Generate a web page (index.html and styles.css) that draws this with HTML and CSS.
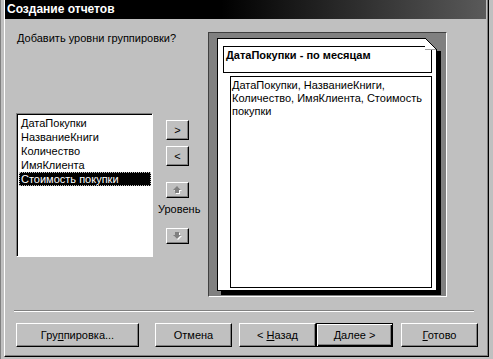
FILE: index.html
```html
<!DOCTYPE html>
<html lang="ru">
<head>
    <meta charset="UTF-8">
    <meta name="viewport" content="width=device-width, initial-scale=1.0">
    <title>Создание отчетов</title>
    <link rel="stylesheet" href="styles.css">
</head>
<body>
    <div class="screen">
        <div class="edge"></div>
        <div class="dialog">
            <div class="titlebar">Создание отчетов</div>

            <div class="main">
                <div class="fields">
                    <p class="question">Добавить уровни группировки?</p>
                    <ul class="listbox">
                        <li>ДатаПокупки</li>
                        <li>НазваниеКниги</li>
                        <li>Количество</li>
                        <li>ИмяКлиента</li>
                        <li class="selected">Стоимость покупки</li>
                    </ul>
                </div>

                <div class="movers">
                    <button class="btn small">&gt;</button>
                    <button class="btn small">&lt;</button>
                    <button class="btn small arrow up">
                        <svg width="10" height="9" viewBox="0 0 10 9">
                            <polygon points="5,1 9,5 7,5 7,8 3,8 3,5 1,5" fill="#fff"/>
                            <polygon points="4,0 8,4 6,4 6,7 2,7 2,4 0,4" fill="#808080"/>
                        </svg>
                    </button>
                    <span class="level-label">Уровень</span>
                    <button class="btn small arrow down">
                        <svg width="10" height="9" viewBox="0 0 10 9">
                            <polygon points="5,8 9,4 7,4 7,1 3,1 3,4 1,4" fill="#fff"/>
                            <polygon points="4,7 8,3 6,3 6,0 2,0 2,3 0,3" fill="#808080"/>
                        </svg>
                    </button>
                </div>

                <div class="preview">
                    <div class="page">
                        <div class="group-head">ДатаПокупки - по месяцам</div>
                        <div class="group-body">ДатаПокупки, НазваниеКниги, Количество, ИмяКлиента, Стоимость покупки</div>
                        <svg class="fold" width="17" height="13" viewBox="0 0 17 13">
                            <polygon points="1,0 17,0 17,13 13,13 13,12" fill="#808080"/>
                            <polygon points="1,0 12,11 1,11" fill="#fff"/>
                            <line x1="1" y1="11.5" x2="12" y2="11.5" stroke="#a0a0a0"/>
                            <line x1="1" y1="0" x2="13" y2="12" stroke="#000"/>
                        </svg>
                    </div>
                </div>
            </div>

            <div class="separator"></div>

            <div class="actions">
                <button class="btn wide"><span>Гру<u>п</u>пировка...</span></button>
                <button class="btn"><span>Отмена</span></button>
                <button class="btn back"><span>&lt; <u>Н</u>азад</span></button>
                <button class="btn default"><span><u>Д</u>алее &gt;</span></button>
                <button class="btn finish"><span><u>Г</u>отово</span></button>
            </div>
        </div>
        <div class="edge right"></div>
    </div>
</body>
</html>
```

FILE: styles.css
```css
* {
    margin: 0;
    padding: 0;
    box-sizing: border-box;
}

body {
    width: 493px;
    height: 359px;
    overflow: hidden;
    background: #c0c0c0;
    font-family: 'Liberation Sans', Arial, sans-serif;
    font-size: 11px;
    color: #000;
}

.screen {
    display: flex;
    height: 359px;
}

.edge {
    width: 4px;
    background: #c0c0c0;
    border-left: 1px solid #808080;
}

.edge.right {
    border-left: none;
}

.dialog {
    width: 485px;
    height: 357px;
    background: #c0c0c0;
    border-left: 1px solid #fff;
    border-right: 1px solid #000;
    border-bottom: 1px solid #000;
    padding-right: 1px;
    box-shadow: inset -1px -1px #808080;
}

.titlebar {
    height: 19px;
    margin-right: 1px;
    padding: 2px 0 0 2px;
    background: linear-gradient(to right, #000 45%, #5a5a5a 100%);
    color: #fff;
    font-weight: bold;
    font-size: 12px;
    line-height: 15px;
}

/* верхняя часть мастера */
.main {
    display: flex;
    height: 278px;
    padding: 13px 0 0 11px;
}

.fields {
    width: 136px;
}

.question {
    white-space: nowrap;
    line-height: 13px;
    padding-left: 1px;
}

.listbox {
    list-style: none;
    width: 137px;
    height: 144px;
    margin-top: 68px;
    background: #fff;
    border: 1px solid;
    border-color: #808080 #fff #fff #808080;
    box-shadow: inset 1px 1px #000;
    padding: 2px 1px 0 2px;
}

.listbox li {
    line-height: 14px;
    height: 14px;
    padding-left: 2px;
    white-space: nowrap;
}

.listbox li.selected {
    background: #000;
    color: #fff;
    outline: 1px dotted #c0c0c0;
    outline-offset: -1px;
}

.movers {
    width: 56px;
    display: flex;
    flex-direction: column;
    align-items: flex-start;
    padding: 88px 0 0 14px;
}

.btn {
    font-family: 'Liberation Sans', Arial, sans-serif;
    font-size: 11px;
    color: #000;
    background: #c0c0c0;
    border: 1px solid;
    border-color: #fff #000 #000 #fff;
    box-shadow: inset -1px -1px #808080;
    width: 77px;
    height: 24px;
    display: flex;
    align-items: center;
    justify-content: center;
    white-space: pre;
}

.btn.small {
    width: 23px;
    height: 20px;
    margin-bottom: 6px;
}

.btn.arrow {
    height: 16px;
    margin-bottom: 0;
}

.btn.up {
    margin-top: 10px;
}

.level-label {
    margin: 5px 0 12px -8px;
    line-height: 13px;
}

.preview {
    width: 239px;
    height: 265px;
    background: #808080;
    border: 1px solid;
    border-color: #404040 #fff #fff #404040;
    padding: 5px 0 0 8px;
}

.page {
    position: relative;
    width: 220px;
    height: 253px;
    background: #fff;
    border: 1px solid #000;
    box-shadow: 4px 4px 0 #000;
    padding: 7px 0 0 5px;
}

.fold {
    position: absolute;
    top: -1px;
    right: -5px;
}

.group-head {
    width: 209px;
    height: 27px;
    border: 1px solid #000;
    font-weight: bold;
    padding: 2px 0 0 2px;
    line-height: 13px;
    white-space: nowrap;
}

.group-body {
    width: 202px;
    height: 212px;
    margin: 3px 0 0 7px;
    border: 1px solid #000;
    padding: 2px 2px 0 1px;
    line-height: 13px;
}

/* нижняя панель */
.separator {
    width: 460px;
    margin: 13px 0 0 9px;
    border-top: 1px solid #808080;
    border-bottom: 1px solid #fff;
}

.actions {
    display: flex;
    padding: 11px 0 0 11px;
}

.btn.wide {
    width: 123px;
    margin-right: 16px;
}

.btn.back {
    margin-left: 7px;
}

.btn.default {
    border: 1px solid #000;
    box-shadow: inset 1px 1px #fff, inset -1px -1px #000, inset -2px -2px #808080;
}

.btn.finish {
    margin-left: 8px;
}

u {
    text-decoration: underline;
    text-underline-offset: 1px;
}
```
